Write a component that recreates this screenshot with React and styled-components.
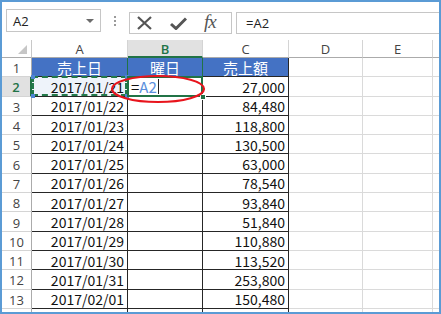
import styled, { createGlobalStyle } from 'styled-components';

const GlobalStyle = createGlobalStyle`
	html, body {
		margin: 0;
		padding: 0;
		background: #ffffff;
	}
	* {
		box-sizing: border-box;
	}
`;

const rows = [
	['2017/01/21', '27,000'],
	['2017/01/22', '84,480'],
	['2017/01/23', '118,800'],
	['2017/01/24', '130,500'],
	['2017/01/25', '63,000'],
	['2017/01/26', '78,540'],
	['2017/01/27', '93,840'],
	['2017/01/28', '51,840'],
	['2017/01/29', '110,880'],
	['2017/01/30', '113,520'],
	['2017/01/31', '253,800'],
	['2017/02/01', '150,480'],
	['2017/02/02', '195,840'],
];

const columns = ['A', 'B', 'C', 'D', 'E', ''];

const Frame = styled.div`
	width: 441px;
	height: 314px;
	border: 2px solid #5b9bd5;
	overflow: hidden;
	background: #ffffff;
	display: flex;
	flex-direction: column;
`;

const FormulaBar = styled.div`
	height: 38px;
	flex: none;
	display: flex;
	align-items: flex-start;
	padding: 7px 0 0 4px;
`;

const NameBox = styled.div`
	width: 95px;
	height: 23px;
	border: 1px solid #c6c6c6;
	display: flex;
	align-items: center;
	justify-content: space-between;
	padding: 0 6px 0 6px;
	font: 13px 'Open Sans', 'Liberation Sans', sans-serif;
	color: #222;
`;

const DropArrow = styled.span`
	width: 0;
	height: 0;
	border-left: 4px solid transparent;
	border-right: 4px solid transparent;
	border-top: 4px solid #6b6b6b;
	margin-top: 1px;
`;

const Grip = styled.div`
	width: 3px;
	height: 23px;
	margin-left: 12px;
	display: flex;
	flex-direction: column;
	justify-content: center;
	gap: 2px;
	align-items: center;

	& span {
		width: 2px;
		height: 2px;
		background: #9a9a9a;
	}
`;

const FxBox = styled.div`
	width: 103px;
	height: 22px;
	margin: 3px 0 0 13px;
	border: 1px solid #c6c6c6;
	display: flex;
	align-items: center;
	padding-left: 6px;
	gap: 17px;
	color: #555;
`;

const FxLabel = styled.span`
	font: italic 19px 'Liberation Serif', 'DejaVu Serif', serif;
	color: #555;
	margin-top: -3px;
	letter-spacing: -1px;
`;

const FormulaInput = styled.div`
	flex: 1;
	height: 22px;
	margin: 3px 0 0 4px;
	border: 1px solid #c6c6c6;
	border-right: none;
	display: flex;
	align-items: center;
	padding-left: 9px;
	font: 13px 'Open Sans', 'Liberation Sans', sans-serif;
	color: #222;
`;

const Sheet = styled.div`
	position: relative;
	flex: 1;
	overflow: hidden;
	display: grid;
	grid-template-columns: 30px 96px 75px 86px 74px 70px 40px;
	grid-template-rows: 18px repeat(14, 19.3px);
	align-content: start;
`;

const Corner = styled.div`
	border-right: 1px solid #c8c8c8;
	border-bottom: 1px solid #ababab;
	display: flex;
	align-items: flex-end;
	justify-content: flex-end;
	padding: 0 4px 3px 0;
`;

const ColHead = styled.div`
	display: flex;
	align-items: center;
	justify-content: center;
	font: ${(p) => (p.$selected ? '600' : '400')} 13px 'Open Sans', 'Liberation Sans', sans-serif;
	color: ${(p) => (p.$selected ? '#217346' : '#444')};
	background: ${(p) => (p.$selected ? '#e1e1e1' : '#ffffff')};
	border-right: 1px solid #d4d4d4;
	border-bottom: ${(p) => (p.$selected ? '2px solid #217346' : '1px solid #ababab')};
	padding-top: 1px;
`;

const RowHead = styled.div`
	display: flex;
	align-items: center;
	justify-content: center;
	font: ${(p) => (p.$selected ? '600' : '400')} 13px 'Open Sans', 'Liberation Sans', sans-serif;
	color: ${(p) => (p.$selected ? '#217346' : '#444')};
	background: ${(p) => (p.$selected ? '#e1e1e1' : '#ffffff')};
	border-right: ${(p) => (p.$selected ? '2px solid #217346' : '1px solid #ababab')};
	border-bottom: 1px solid #d4d4d4;
	padding-top: 2px;
`;

const Cell = styled.div`
	position: relative;
	display: flex;
	align-items: center;
	justify-content: ${(p) => p.$align || 'flex-start'};
	padding: 1px 3px 0 3px;
	font: 14px 'Noto Sans CJK JP', sans-serif;
	line-height: 1;
	white-space: nowrap;
	color: #111;
	border-right: 1px solid ${(p) => (p.$table ? '#262626' : '#dadada')};
	border-bottom: 1px solid ${(p) => (p.$table ? '#262626' : '#dadada')};
`;

const TitleCell = styled(Cell)`
	background: #4472c4;
	color: #ffffff;
	font-size: 15px;

	&::before {
		content: '';
		display: ${(p) => (p.$active ? 'block' : 'none')};
		position: absolute;
		inset: 0 -1px 0 -1px;
		border-left: 1px solid #217346;
		border-right: 1px solid #217346;
	}
`;

const RefCell = styled(Cell)`
	background: #eef3fa;

	&::after {
		content: '';
		position: absolute;
		inset: -1px 0 0 0;
		border: 2px dashed #237a4a;
	}
`;

const Handle = styled.span`
	position: absolute;
	width: 4px;
	height: 4px;
	background: #4f86d4;
	z-index: 2;
	${(p) => p.$pos}
`;

const ActiveCell = styled(Cell)`
	padding-left: 3px;
	font-size: 15px;
	z-index: 3;

	&::after {
		content: '';
		position: absolute;
		inset: -1px -1px -1px -1px;
		border: 2px solid #217346;
	}
`;

const FillHandle = styled.span`
	position: absolute;
	right: -4px;
	bottom: -4px;
	width: 6px;
	height: 6px;
	background: #217346;
	border: 1px solid #ffffff;
	z-index: 4;
`;

const RefText = styled.span`
	color: #5b8fdc;
`;

const Caret = styled.span`
	width: 1px;
	height: 15px;
	background: #222;
	margin-left: 1px;
`;

const Ellipse = styled.svg`
	position: absolute;
	left: 107px;
	top: 34px;
	z-index: 5;
	pointer-events: none;
`;

const CrossIcon = () => (
	<svg width="17" height="14" viewBox="0 0 17 14">
		<path d="M2 1 L15 13 M15 1 L2 13" stroke="#555" strokeWidth="2.2" fill="none" />
	</svg>
);

const CheckIcon = () => (
	<svg width="17" height="13" viewBox="0 0 17 13">
		<path d="M1 7 L6 11.5 L16 1.5" stroke="#555" strokeWidth="3" fill="none" />
	</svg>
);

const App = () => {
	return (
		<>
			<GlobalStyle />
			<Frame>
				<FormulaBar>
					<NameBox>
						A2
						<DropArrow />
					</NameBox>
					<Grip>
						<span />
						<span />
						<span />
					</Grip>
					<FxBox>
						<CrossIcon />
						<CheckIcon />
						<FxLabel>fx</FxLabel>
					</FxBox>
					<FormulaInput>=A2</FormulaInput>
				</FormulaBar>
				<Sheet>
					<Corner>
						<svg width="9" height="9" viewBox="0 0 9 9">
							<polygon points="9,0 9,9 0,9" fill="#c6c6c6" />
						</svg>
					</Corner>
					{columns.map((c) => (
						<ColHead key={c || 'F'} $selected={c === 'B'}>
							{c}
						</ColHead>
					))}

					<RowHead>1</RowHead>
					<TitleCell $table $align="center">売上日</TitleCell>
					<TitleCell $table $active $align="center">曜日</TitleCell>
					<TitleCell $table $align="center">売上額</TitleCell>
					<Cell />
					<Cell />
					<Cell />

					{rows.map(([date, amount], i) => {
						const n = i + 2;
						if (n === 2) {
							return [
								<RowHead key="h2" $selected>2</RowHead>,
								<RefCell key="a2" $table $align="flex-end">
									{date}
									<Handle $pos="left: -1px; top: -2px;" />
									<Handle $pos="right: -2px; top: -2px;" />
									<Handle $pos="left: -1px; bottom: -2px;" />
									<Handle $pos="right: -2px; bottom: -2px;" />
								</RefCell>,
								<ActiveCell key="b2" $table>
									=<RefText>A2</RefText>
									<Caret />
									<FillHandle />
								</ActiveCell>,
								<Cell key="c2" $table $align="flex-end">{amount}</Cell>,
								<Cell key="d2" />,
								<Cell key="e2" />,
								<Cell key="f2" />,
							];
						}
						return [
							<RowHead key={'h' + n}>{n}</RowHead>,
							<Cell key={'a' + n} $table $align="flex-end">{date}</Cell>,
							<Cell key={'b' + n} $table />,
							<Cell key={'c' + n} $table $align="flex-end">{amount}</Cell>,
							<Cell key={'d' + n} />,
							<Cell key={'e' + n} />,
							<Cell key={'f' + n} />,
						];
					})}

					<Ellipse width="98" height="30" viewBox="0 0 98 30">
						<ellipse cx="49" cy="15" rx="46" ry="13" stroke="#e8141c" strokeWidth="2.2" fill="none" />
					</Ellipse>
				</Sheet>
			</Frame>
		</>
	);
};

export default App;
